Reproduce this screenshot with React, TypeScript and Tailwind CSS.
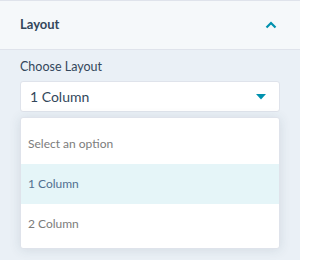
import React from "react";

export default function App() {
  return (
    <div
      className="w-[300px] h-[260px] bg-[#eaf0f6] overflow-hidden"
      style={{ fontFamily: "Lato, 'Open Sans', sans-serif" }}
    >
      <div className="h-[50px] bg-[#f5f8fa] border-t border-b border-[#dfe3eb] flex items-center justify-between pl-5 pr-[23px]">
        <span className="text-[13px] font-bold text-[#33475b]">Layout</span>
        <svg width="12" height="8" viewBox="0 0 12 8" className="text-[#0091ae]">
          <path d="M1.5 6.5 L6 2 L10.5 6.5" fill="none" stroke="currentColor" strokeWidth="2.2" />
        </svg>
      </div>
      <div className="px-5 pt-[9px]">
        <div className="text-[12.5px] text-[#33475b] leading-[16px]">Choose Layout</div>
        <div className="mt-[6px] h-[31px] bg-white rounded-[3px] border border-[#dfe3eb] flex items-center justify-between pl-[9px] pr-[13px]">
          <span className="text-[14px] text-[#33475b]">1 Column</span>
          <svg width="10" height="6" viewBox="0 0 10 6" className="text-[#0091ae]">
            <path d="M0 0 L10 0 L5 5.5 Z" fill="currentColor" />
          </svg>
        </div>
        <div className="mt-[5px] h-[132px] bg-white rounded-[3px] border border-[#dfe3eb] shadow-[0_1px_12px_rgba(45,62,80,0.12)] pt-[6px]">
          <div className="h-[40px] flex items-center pl-[7px] text-[12px] text-[#7c7c7c]">Select an option</div>
          <div className="h-[40px] flex items-center pl-[7px] text-[12px] text-[#516f90] bg-[#e5f5f8]">1 Column</div>
          <div className="h-[40px] flex items-center pl-[7px] text-[12px] text-[#7c7c7c]">2 Column</div>
        </div>
      </div>
    </div>
  );
}
